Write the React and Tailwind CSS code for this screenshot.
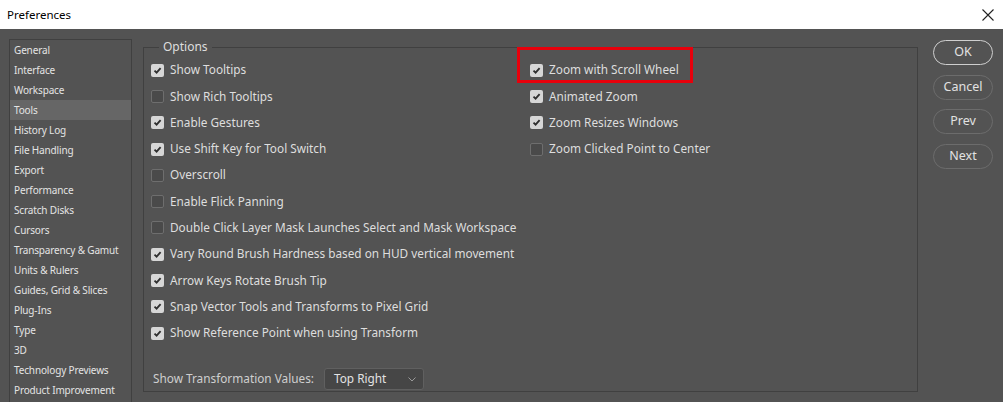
import React from 'react';

const sections = [
  'General', 'Interface', 'Workspace', 'Tools', 'History Log', 'File Handling', 'Export',
  'Performance', 'Scratch Disks', 'Cursors', 'Transparency & Gamut', 'Units & Rulers',
  'Guides, Grid & Slices', 'Plug-Ins', 'Type', '3D', 'Technology Previews', 'Product Improvement',
];

const leftOptions = [
  ['Show Tooltips', true],
  ['Show Rich Tooltips', false],
  ['Enable Gestures', true],
  ['Use Shift Key for Tool Switch', true],
  ['Overscroll', false],
  ['Enable Flick Panning', false],
  ['Double Click Layer Mask Launches Select and Mask Workspace', false],
  ['Vary Round Brush Hardness based on HUD vertical movement', true],
  ['Arrow Keys Rotate Brush Tip', true],
  ['Snap Vector Tools and Transforms to Pixel Grid', true],
  ['Show Reference Point when using Transform', true],
];

const rightOptions = [
  ['Zoom with Scroll Wheel', true],
  ['Animated Zoom', true],
  ['Zoom Resizes Windows', true],
  ['Zoom Clicked Point to Center', false],
];

const Checkbox = ({ checked }) => (
  <span
    className={
      checked
        ? 'w-[13px] h-[13px] rounded-[2px] bg-[#d6d6d6] flex items-center justify-center shrink-0'
        : 'w-[13px] h-[13px] rounded-[2px] bg-[#4a4a4a] border border-[#6e6e6e] shrink-0'
    }
  >
    {checked && (
      <svg width="9" height="9" viewBox="0 0 9 9">
        <path d="M1.5 4.6 L3.6 6.7 L7.6 2.2" fill="none" stroke="#2e2e2e" strokeWidth="1.8" />
      </svg>
    )}
  </span>
);

const Option = ({ label, checked, highlight }) => (
  <div className="h-[26.3px] flex items-center gap-[6px] relative">
    <Checkbox checked={checked} />
    <span className="text-[#dedede] whitespace-nowrap">{label}</span>
    {highlight && (
      <span className="absolute left-[-13px] top-[-10px] w-[176px] h-[36px] border-[3px] border-[#e8000b]" />
    )}
  </div>
);

const Button = ({ children, primary }) => (
  <button
    className={
      'w-[60px] h-[25px] rounded-full text-[12.5px] text-[#e2e2e2] ' +
      (primary ? 'border-[1.5px] border-[#cfcfcf]' : 'border border-[#6c6c6c]')
    }
  >
    {children}
  </button>
);

export default function App() {
  return (
    <div className="w-[1003px] h-[402px] overflow-hidden bg-[#535353] flex flex-col" style={{ fontFamily: '"Noto Sans", "Open Sans", sans-serif' }}>
      <div className="h-[29px] bg-white flex items-center justify-between pl-[7px] pr-[9px] shrink-0">
        <span className="text-[11.5px] text-black">Preferences</span>
        <svg width="12" height="12" viewBox="0 0 12 12">
          <path d="M0.5 0.5 L11.5 11.5 M11.5 0.5 L0.5 11.5" stroke="#222" strokeWidth="1.1" />
        </svg>
      </div>

      <div className="flex flex-1 pt-[10px] pl-[9px]">
        <div className="w-[123px] h-[380px] border border-[#404040] shrink-0">
          {sections.map((s) => (
            <div
              key={s}
              className={
                'h-[20px] pl-[4px] flex items-center text-[10px] tracking-[-0.15px] text-[#e4e4e4] whitespace-nowrap ' +
                (s === 'Tools' ? 'bg-[#666666]' : '')
              }
            >
              {s}
            </div>
          ))}
        </div>

        <fieldset className="ml-[11px] w-[775px] h-[352px] mt-[1px] border border-[#404040] pl-[7px] text-[11.8px] flex flex-col">
          <legend className="ml-[8px] px-[4px] text-[12px] text-[#dedede] leading-[14px]">Options</legend>
          <div className="flex mt-[3px]">
            <div className="w-[379px] shrink-0">
              {leftOptions.map(([l, c]) => (
                <Option key={l} label={l} checked={c} />
              ))}
            </div>
            <div>
              {rightOptions.map(([l, c], i) => (
                <Option key={l} label={l} checked={c} highlight={i === 0} />
              ))}
            </div>
          </div>
          <div className="mt-[22px] flex items-center gap-[10px] pl-[2px]">
            <span className="text-[#cfcfcf]">Show Transformation Values:</span>
            <div className="w-[100px] h-[22px] rounded-[3px] bg-[#464646] border border-[#606060] flex items-center justify-between pl-[9px] pr-[7px]">
              <span className="text-[#e2e2e2]">Top Right</span>
              <svg width="8" height="5" viewBox="0 0 8 5">
                <path d="M0.5 0.5 L4 4 L7.5 0.5" fill="none" stroke="#9a9a9a" strokeWidth="1" />
              </svg>
            </div>
          </div>
        </fieldset>

        <div className="ml-[15px] flex flex-col gap-[9.5px] pt-[1px]">
          <Button primary>OK</Button>
          <Button>Cancel</Button>
          <Button>Prev</Button>
          <Button>Next</Button>
        </div>
      </div>
    </div>
  );
}
